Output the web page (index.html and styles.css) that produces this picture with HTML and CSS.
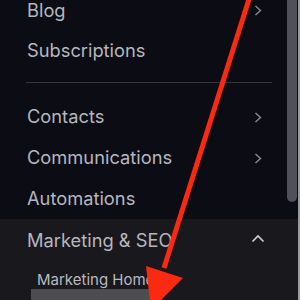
FILE: index.html
```html
<!DOCTYPE html>
<html>
<head>
<meta charset="utf-8">
<link rel="stylesheet" href="styles.css">
</head>
<body>
<div class="frame">
  <nav class="sidebar">
    <div class="top">
      <div class="item first"><span>Blog</span>
        <svg class="chev" width="8" height="11" viewBox="0 0 8 11"><path d="M1.5 1 L6.5 5.5 L1.5 10" fill="none" stroke="currentColor" stroke-width="1.4"/></svg>
      </div>
      <div class="item"><span>Subscriptions</span></div>
      <div class="divider"></div>
      <div class="item tall"><span>Contacts</span>
        <svg class="chev" width="8" height="11" viewBox="0 0 8 11"><path d="M1.5 1 L6.5 5.5 L1.5 10" fill="none" stroke="currentColor" stroke-width="1.4"/></svg>
      </div>
      <div class="item tall"><span>Communications</span>
        <svg class="chev" width="8" height="11" viewBox="0 0 8 11"><path d="M1.5 1 L6.5 5.5 L1.5 10" fill="none" stroke="currentColor" stroke-width="1.4"/></svg>
      </div>
      <div class="item tall"><span>Automations</span></div>
    </div>
    <div class="section">
      <div class="item tall open"><span>Marketing &amp; SEO</span>
        <svg class="chev-up" width="14" height="9" viewBox="0 0 14 9"><path d="M1.5 7.5 L7 2 L12.5 7.5" fill="none" stroke="currentColor" stroke-width="1.7"/></svg>
      </div>
      <div class="sub">Marketing Home</div>
      <div class="sub-active"></div>
    </div>
  </nav>
  <div class="scroll">
    <div class="thumb"></div>
  </div>
  <div class="edge"></div>
</div>
<svg class="arrow" width="300" height="300" viewBox="0 0 300 300">
  <line x1="250" y1="-4" x2="164" y2="268" stroke="#fa2a12" stroke-width="5"/>
  <polygon points="146,266 183,278 151,310" fill="#fa2a12"/>
</svg>
</body>
</html>
```
FILE: styles.css
```css
html, body {
  margin: 0;
  padding: 0;
  background: #0c0d14;
  overflow: hidden;
}
body {
  width: 300px;
  height: 300px;
  position: relative;
  font-family: Inter, "Noto Sans", sans-serif;
}
.frame {
  display: flex;
  width: 300px;
  height: 300px;
}
.sidebar {
  width: 287px;
  display: flex;
  flex-direction: column;
  overflow: hidden;
}
.top {
  background: #0c0d14;
  margin-top: -10px;
  display: flex;
  flex-direction: column;
}
.item {
  height: 40px;
  line-height: 40px;
  font-size: 18.3px;
  color: #b6b7be;
  padding: 0 25px 0 27px;
  display: flex;
  align-items: center;
  justify-content: space-between;
  white-space: nowrap;
}
.item.tall {
  height: 41px;
  line-height: 41px;
}
.chev {
  color: #8b8c93;
  margin-top: 1px;
}
.divider {
  height: 1px;
  background: #33343c;
  margin: 12px 15px 13px 26px;
}
.section {
  flex: 1;
  background: #18181d;
  padding-top: 1px;
  display: flex;
  flex-direction: column;
}
.open {
  padding-right: 22px;
}
.chev-up {
  color: #cfcfd3;
  margin-top: -4px;
}
.sub {
  margin-top: 10px;
  padding-left: 37px;
  font-size: 15px;
  line-height: 18px;
  height: 18px;
  color: #b9bac0;
  white-space: nowrap;
}
.sub-active {
  margin: 0 0 0 31px;
  width: 131px;
  flex: 1;
  background: #4c4c51;
}
.scroll {
  width: 11px;
  background: #0c0d14;
  display: flex;
  flex-direction: column;
}
.scroll::after {
  content: "";
  flex: 1;
  background: #18181d;
  margin-top: 17px;
}
.thumb {
  height: 202px;
  width: 10px;
  background: #505058;
  border-radius: 0 0 5px 5px;
}
.edge {
  width: 2px;
  background: #9a9a9f;
}
.arrow {
  position: absolute;
  left: 0;
  top: 0;
  pointer-events: none;
}
```
